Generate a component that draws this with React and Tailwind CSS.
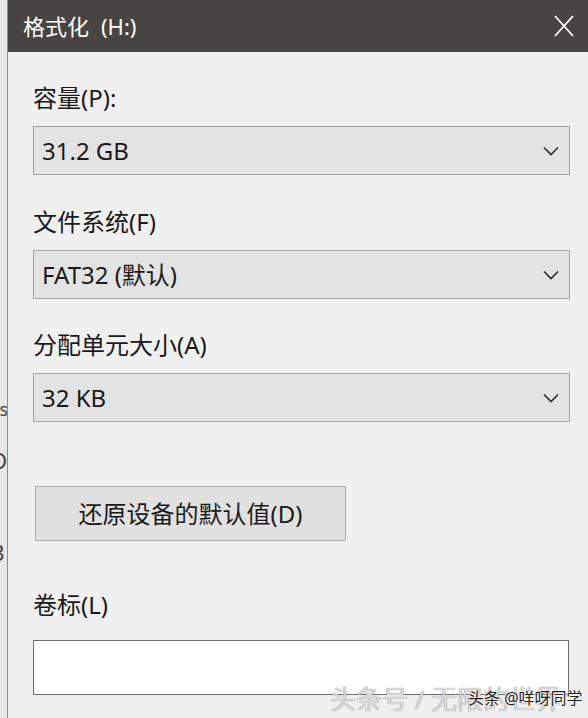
import React from 'react';

const FONT = { fontFamily: '"Noto Sans", "Noto Sans CJK SC", sans-serif' };

function Chevron() {
  return (
    <svg width="16" height="10" viewBox="0 0 16 10" fill="none">
      <polyline points="1,1.5 8,8.5 15,1.5" stroke="#2b2b2b" strokeWidth="1.6" />
    </svg>
  );
}

function Select({ value }) {
  return (
    <div className="h-[49px] w-[537px] flex items-center justify-between bg-[#e3e3e3] border border-[#a3a3a3] pl-[8px] pr-[10px]">
      <span className="text-[24px] leading-[30px] text-[#1a1a1a]">{value}</span>
      <Chevron />
    </div>
  );
}

function Label({ children, className = '' }) {
  return (
    <div className={`h-[30px] leading-[30px] text-[24px] text-[#1a1a1a] ${className}`}>{children}</div>
  );
}

export default function App() {
  return (
    <div className="w-[588px] h-[718px] flex bg-[#f0f0f0] overflow-hidden" style={FONT}>
      {/* background window peeking on the left */}
      <div className="w-[8px] shrink-0 bg-[#e7e7e7] border-r border-[#8c8c8c] relative overflow-hidden">
        <span className="absolute left-[-8px] top-[396px] text-[18px] text-[#444]">rs</span>
        <span className="absolute left-[-10px] top-[444px] text-[22px] text-[#444]">O</span>
        <span className="absolute left-[-8px] top-[536px] text-[22px] text-[#444]">3</span>
      </div>

      <div className="flex-1 flex flex-col relative">
        {/* title bar */}
        <div className="h-[52px] bg-[#474543] flex items-center justify-between pl-[15px] pr-[14px]">
          <span className="text-[22px] text-white flex gap-[12px]">
            <span>格式化</span>
            <span>(H:)</span>
          </span>
          <svg width="20" height="22" viewBox="0 0 20 22">
            <path d="M1 1 L19 21 M19 1 L1 21" stroke="#ffffff" strokeWidth="1.8" />
          </svg>
        </div>

        {/* body */}
        <div className="flex-1 flex flex-col pl-[25px] pt-[31px]">
          <Label className="mb-[13px]">容量(P):</Label>
          <Select value="31.2 GB" />

          <Label className="mt-[32px] mb-[13px]">文件系统(F)</Label>
          <Select value="FAT32 (默认)" />

          <Label className="mt-[31px] mb-[13px]">分配单元大小(A)</Label>
          <Select value="32 KB" />

          <button className="mt-[64px] ml-[2px] w-[311px] h-[55px] bg-[#e1e1e1] border border-[#adadad] text-[24px] text-[#1a1a1a]">
            还原设备的默认值(D)
          </button>

          <Label className="mt-[49px] mb-[20px]">卷标(L)</Label>
          <div className="w-[536px] h-[55px] bg-white border border-[#6e6e6e]" />
        </div>

        {/* watermark */}
        <div className="absolute left-[322px] top-[680px] text-[26px] text-[#d9d9d9] whitespace-nowrap [text-shadow:0_0_1px_#777]">
          头条号 / 无限的世界
        </div>
        <div className="absolute left-[460px] top-[686px] text-[16px] text-[#222] whitespace-nowrap [text-shadow:0_0_2px_#fff,0_0_2px_#fff]">
          头条 @咩呀同学
        </div>
      </div>
    </div>
  );
}
